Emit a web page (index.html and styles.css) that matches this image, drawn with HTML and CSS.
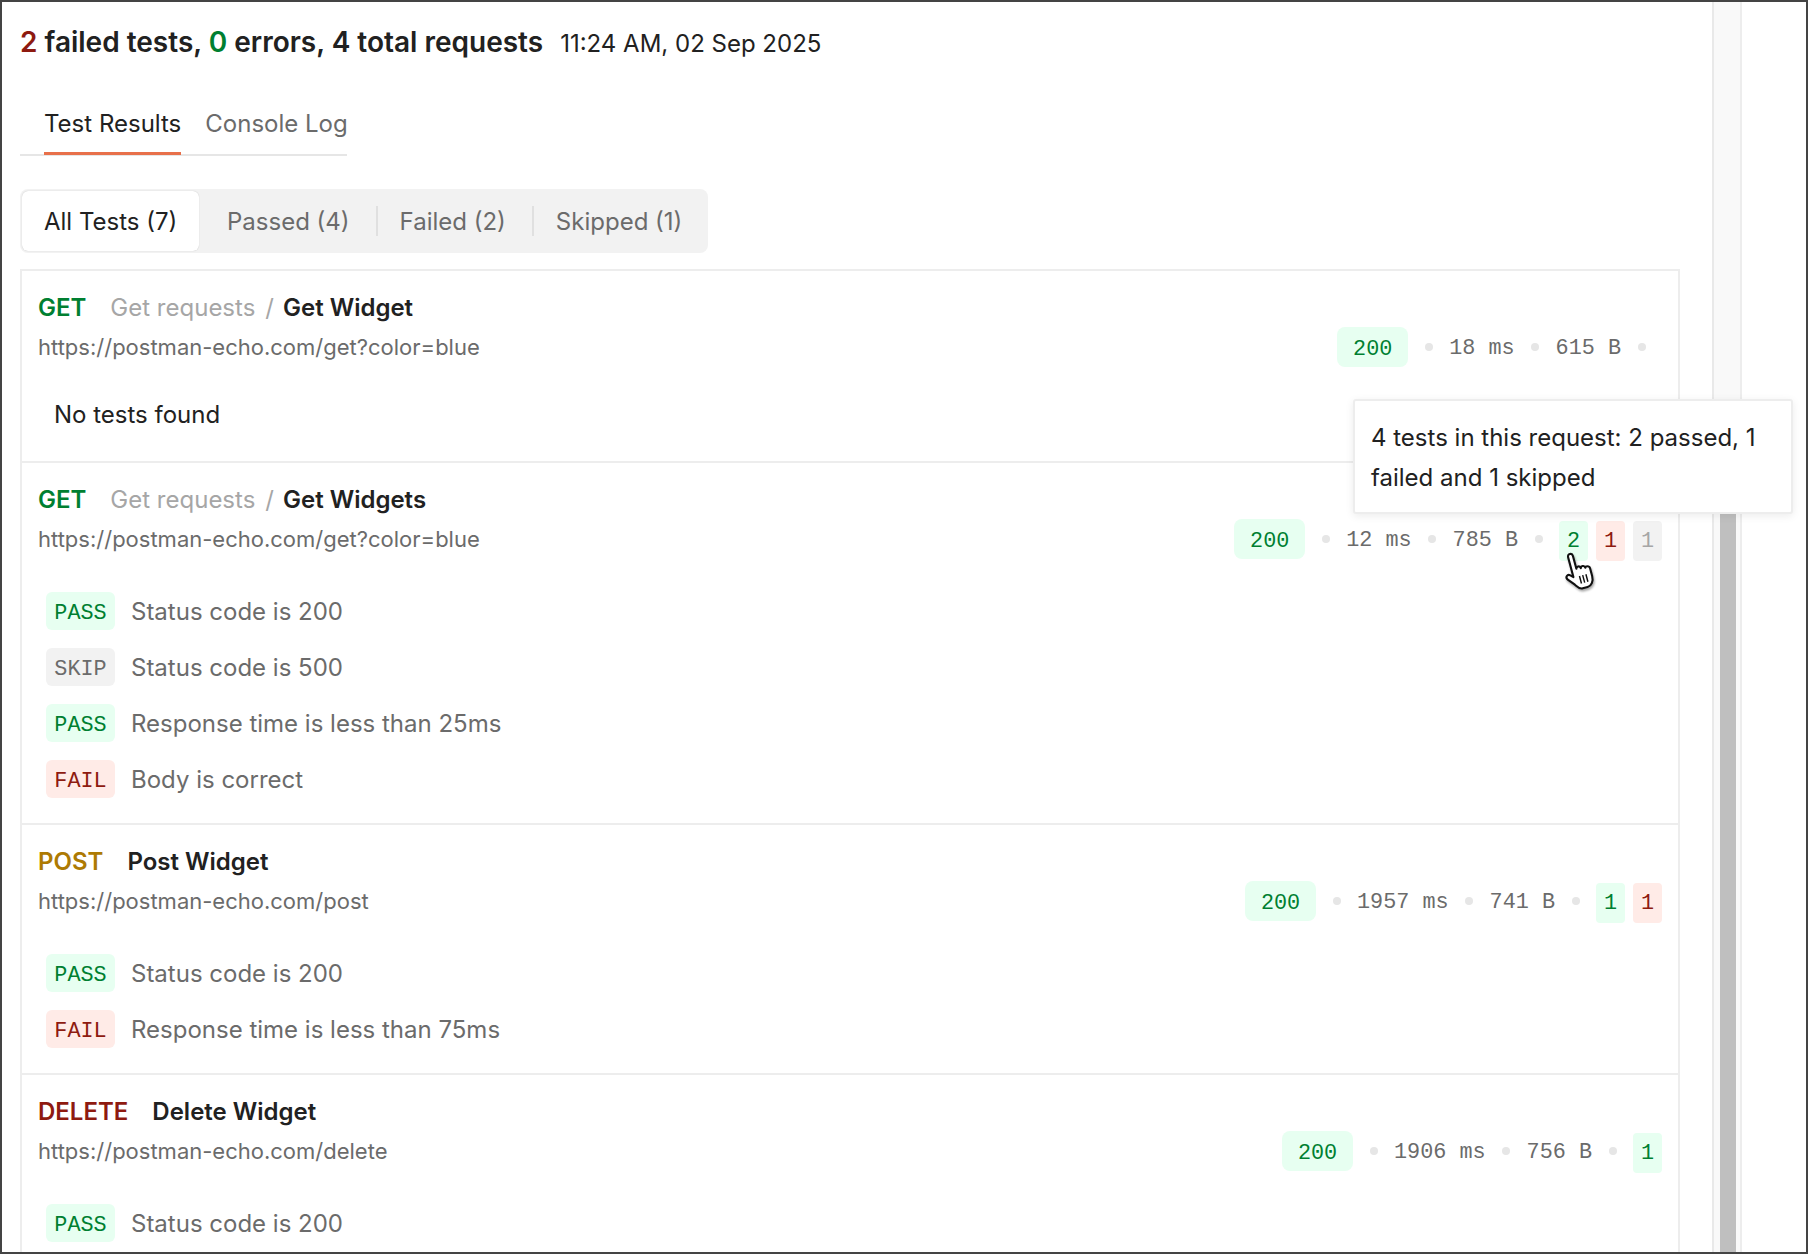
FILE: index.html
```html
<!DOCTYPE html>
<html lang="en">
<head>
<meta charset="utf-8">
<title>Test results</title>
<link rel="stylesheet" href="styles.css">
</head>
<body>
<div class="frame">
  <main class="main">
    <header class="summary">
      <h1 class="summary-title"><span class="c-red">2</span> failed tests, <span class="c-green">0</span> errors, 4 total requests</h1>
      <span class="summary-date">11:24 AM, 02 Sep 2025</span>
    </header>
    <nav class="tabs">
      <a class="tab tab-active">Test Results</a>
      <a class="tab">Console Log</a>
    </nav>
    <div class="segments">
      <button class="seg seg-active">All Tests (7)</button>
      <button class="seg seg-sep">Passed (4)</button>
      <button class="seg seg-sep">Failed (2)</button>
      <button class="seg seg-last">Skipped (1)</button>
    </div>
    <section class="card">
      <article class="req req-empty">
        <div class="req-title"><span class="method c-green">GET</span><span class="folder">Get requests</span><span class="slash">/</span><span class="name">Get Widget</span></div>
        <div class="req-meta">
          <span class="url">https://postman-echo.com/get?color=blue</span>
          <div class="stats">
            <span class="badge status">200</span><i class="dot"></i><span class="stat">18 ms</span><i class="dot"></i><span class="stat">615 B</span><i class="dot"></i>
            <div class="counts"></div>
          </div>
        </div>
        <p class="no-tests">No tests found</p>
      </article>
      <article class="req">
        <div class="req-title"><span class="method c-green">GET</span><span class="folder">Get requests</span><span class="slash">/</span><span class="name">Get Widgets</span></div>
        <div class="req-meta">
          <span class="url">https://postman-echo.com/get?color=blue</span>
          <div class="stats">
            <span class="badge status">200</span><i class="dot"></i><span class="stat">12 ms</span><i class="dot"></i><span class="stat">785 B</span><i class="dot"></i>
            <div class="counts"><span class="count pass">2</span><span class="count fail">1</span><span class="count skip">1</span></div>
          </div>
        </div>
        <ul class="tests">
          <li class="test"><span class="badge verdict pass">PASS</span>Status code is 200</li>
          <li class="test"><span class="badge verdict skip">SKIP</span>Status code is 500</li>
          <li class="test"><span class="badge verdict pass">PASS</span>Response time is less than 25ms</li>
          <li class="test"><span class="badge verdict fail">FAIL</span>Body is correct</li>
        </ul>
      </article>
      <article class="req">
        <div class="req-title"><span class="method c-amber">POST</span><span class="name">Post Widget</span></div>
        <div class="req-meta">
          <span class="url">https://postman-echo.com/post</span>
          <div class="stats">
            <span class="badge status">200</span><i class="dot"></i><span class="stat">1957 ms</span><i class="dot"></i><span class="stat">741 B</span><i class="dot"></i>
            <div class="counts"><span class="count pass">1</span><span class="count fail">1</span></div>
          </div>
        </div>
        <ul class="tests">
          <li class="test"><span class="badge verdict pass">PASS</span>Status code is 200</li>
          <li class="test"><span class="badge verdict fail">FAIL</span>Response time is less than 75ms</li>
        </ul>
      </article>
      <article class="req">
        <div class="req-title"><span class="method c-red">DELETE</span><span class="name">Delete Widget</span></div>
        <div class="req-meta">
          <span class="url">https://postman-echo.com/delete</span>
          <div class="stats">
            <span class="badge status">200</span><i class="dot"></i><span class="stat">1906 ms</span><i class="dot"></i><span class="stat">756 B</span><i class="dot"></i>
            <div class="counts"><span class="count pass">1</span></div>
          </div>
        </div>
        <ul class="tests">
          <li class="test"><span class="badge verdict pass">PASS</span>Status code is 200</li>
        </ul>
      </article>
    </section>
  </main>
  <div class="scrolltrack"><div class="scrollthumb"></div></div>
  <aside class="gutter"></aside>
  <div class="tooltip">4 tests in this request: 2 passed, 1 failed and 1 skipped</div>
  <svg class="hand" viewBox="0 0 32 36" width="36" height="40" aria-hidden="true">
    <g transform="rotate(-15 16 18)">
      <path d="M8 3C8 -0.200 12.500 -0.200 12.500 3L12.500 15C12.800 12.800 16.500 12.800 16.500 15.500C16.800 13.500 20.500 13.500 20.500 16.200C20.800 14.600 24.500 15 24.500 17.800L24.500 25C24.500 30 21.500 33.500 18 33.500L13.500 33.500C10.500 33.500 9.500 31.500 7.500 28.500L2.500 22.500C0.500 19.500 3.500 17.300 5.700 19.300L8 21.500Z" fill="#fff" stroke="#111" stroke-width="1.900" stroke-linejoin="round"/>
      <path d="M13.500 22V29M16.500 22V29M19.500 22V29" fill="none" stroke="#111" stroke-width="1.300"/>
    </g>
  </svg>
</div>
</body>
</html>
```
FILE: styles.css
```css
* { box-sizing: border-box; }
html, body { margin: 0; height: 100%; background: #fff; }
body { font-family: Inter, "Liberation Sans", sans-serif; font-size: 24px; color: #212121; }

.frame {
  position: relative;
  display: flex;
  width: 1808px;
  height: 1254px;
  border: 2px solid #444;
  overflow: hidden;
}
.main { width: 1710px; flex: none; padding: 0 32px 0 18px; overflow: hidden; }

.summary { display: flex; align-items: baseline; gap: 17px; height: 80px; padding-top: 22px; }
.summary-title { margin: 0; font-size: 28px; font-weight: 600; line-height: 36px; }
.summary-date { font-size: 24px; }
.c-red { color: #8e1a10; }
.c-green { color: #007f31; }
.c-amber { color: #ad7a03; }

.tabs { display: flex; width: 327px; gap: 24px; padding-left: 24px; height: 74px; border-bottom: 2px solid #e6e6e6; align-items: stretch; }
.tab { display: flex; align-items: center; padding-top: 12px; color: #6b6b6b; white-space: nowrap; margin-bottom: -1px; border-bottom: 3px solid transparent; }
.tab-active { color: #212121; border-bottom-color: #e8704a; }

.segments { display: flex; width: 688px; height: 64px; margin-top: 33px; padding: 2px; background: #f2f2f2; border-radius: 8px; }
.seg { position: relative; border: 0; background: none; padding: 0 28px 0 22px; font: inherit; color: #6b6b6b; white-space: nowrap; }
.seg-active { background: #fff; color: #212121; border-radius: 6px; padding: 0 22px; width: 177px; box-shadow: 0 0 1px rgba(0,0,0,.25); margin-right: 6px; }
.seg-sep::after { content: ""; position: absolute; right: 0; top: 15px; bottom: 15px; width: 2px; background: #e0e0e0; }
.seg-last { padding-right: 20px; }

.card { margin-top: 16px; border: 2px solid #ededed; border-bottom: 0; }
.req { padding: 22px 16px 25px; border-bottom: 2px solid #ededed; }
.req-empty { height: 192px; }
.req-title { display: flex; align-items: center; height: 28px; }
.method { font-weight: 600; margin-right: 24px; }
.folder { color: #a6a6a6; }
.slash { color: #a6a6a6; margin: 0 9px 0 10px; }
.name { font-weight: 600; }
.req-meta { display: flex; align-items: center; justify-content: space-between; height: 40px; margin-top: 6px; }
.url { color: #6b6b6b; font-size: 22px; }
.stats { display: flex; align-items: center; gap: 16.500px; font-family: "Liberation Mono", "DejaVu Sans Mono", monospace; font-size: 21.800px; color: #6b6b6b; }
.stat { padding-top: 2px; }
.badge { display: inline-flex; align-items: center; justify-content: center; padding-top: 4px; font-family: "Liberation Mono", "DejaVu Sans Mono", monospace; font-size: 21.800px; }
.status { height: 40px; width: 71px; border-radius: 8px; background: #e7fff1; color: #007f31; }
.dot { width: 8px; height: 8px; border-radius: 50%; background: #e6e6e6; }
.counts { display: flex; gap: 8px; margin-top: 4px; }
.count { display: flex; align-items: center; justify-content: center; width: 29px; height: 40px; border-radius: 4px; }
.pass { background: #e7fff1; color: #007f31; }
.fail { background: #ffebe7; color: #8e1a10; }
.skip { background: #f2f2f2; color: #a6a6a6; }
.verdict.skip { color: #6b6b6b; }
.no-tests { margin: 32px 0 0 16px; line-height: 32px; }
.tests { list-style: none; margin: 33px 0 0 8px; padding: 0; display: flex; flex-direction: column; gap: 18px; }
.test { display: flex; align-items: center; height: 38px; color: #6b6b6b; }
.verdict { width: 69px; height: 38px; border-radius: 6px; margin-right: 16px; }

.scrolltrack { width: 30px; flex: none; padding-left: 6px; background: #f9f9f9; border-left: 2px solid #e9e9e9; border-right: 2px solid #ededed; }
.scrollthumb { width: 16px; height: 900px; margin-top: 480px; background: #bfbfbf; }
.gutter { flex: 1; }

.tooltip { position: absolute; left: 1351px; top: 397px; width: 440px; height: 115px; padding: 17px 16px; background: #fff; border: 2px solid #ededed; border-radius: 3px; box-shadow: 0 2px 8px rgba(0,0,0,.08); line-height: 40px; }
.hand { position: absolute; left: 1561px; top: 549px; filter: drop-shadow(1px 2px 1px rgba(0,0,0,.35)); }
```
